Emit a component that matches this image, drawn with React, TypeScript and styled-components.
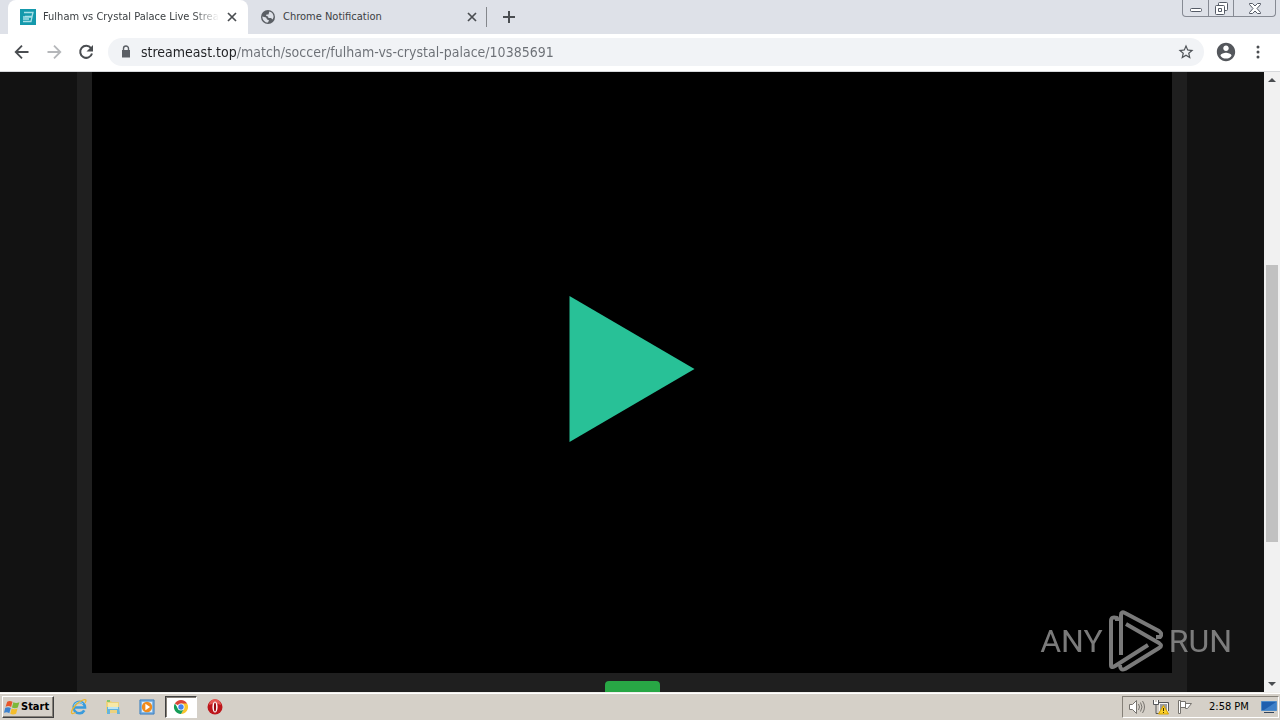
import React from 'react';
import styled, { createGlobalStyle } from 'styled-components';

const GlobalStyle = createGlobalStyle`
  * { box-sizing: border-box; }
  body { margin: 0; overflow: hidden; font: 11px/16px Tahoma, "DejaVu Sans Condensed", "DejaVu Sans", sans-serif; }
  button { font: inherit; color: inherit; padding: 0; border: 0; background: none; }
  svg { display: block; flex: none; }
`;

const Desktop = styled.div`
  height: 100vh;
  display: flex;
  flex-direction: column;
`;

const TabStrip = styled.header`
  flex: none;
  height: 34px;
  display: flex;
  padding-left: 8px;
  background: #dee1e8;
`;

const Tab = styled.div<{ $active?: boolean }>`
  width: 240px;
  display: flex;
  align-items: center;
  gap: 7px;
  padding: 0 10px 0 12px;
  color: #3c4043;
  background: ${(p) => (p.$active ? '#fff' : 'transparent')};
  border-radius: 8px 8px 0 0;
`;

const TabTitle = styled.button<{ $fade?: boolean }>`
  flex: 1;
  min-width: 0;
  overflow: hidden;
  white-space: nowrap;
  text-align: left;
  ${(p) => p.$fade && 'mask-image: linear-gradient(90deg, #000 85%, transparent);'}
`;

const IconButton = styled.button<{ $size?: number; $color?: string }>`
  flex: none;
  width: ${(p) => p.$size || 16}px;
  height: ${(p) => p.$size || 16}px;
  display: flex;
  align-items: center;
  justify-content: center;
  color: ${(p) => p.$color || '#4a4d51'};
`;

const NewTab = styled.div`
  align-self: center;
  height: 20px;
  display: flex;
  align-items: center;
  padding-left: 14px;
  margin-left: -2px;
  border-left: 1px solid #84878c;
`;

const WindowControls = styled.div`
  display: flex;
  height: 17px;
  margin: 0 4px 0 auto;
  border: 1px solid #868a93;
  border-top: 0;
  border-radius: 0 0 4px 4px;
`;

const WindowButton = styled.button<{ $wide?: boolean }>`
  width: ${(p) => (p.$wide ? 42 : 25)}px;
  display: flex;
  align-items: center;
  justify-content: center;
  & + & { border-left: 1px solid #868a93; }
`;

const Toolbar = styled.nav`
  flex: none;
  height: 38px;
  display: flex;
  align-items: center;
  gap: 8px;
  padding: 0 10px 1px;
  background: #fff;
  border-bottom: 1px solid #d6d8db;
`;

const Omnibox = styled.label`
  flex: 1;
  height: 28px;
  display: flex;
  align-items: center;
  gap: 7px;
  margin: 0 2px;
  padding: 0 10px;
  border-radius: 14px;
  background: #f1f3f6;
`;

const Address = styled.input`
  flex: 1;
  min-width: 0;
  height: 20px;
  padding: 0;
  border: 0;
  outline: 0;
  font: 14px/20px Tahoma, "DejaVu Sans Condensed", "DejaVu Sans", sans-serif;
  color: transparent;
  background: linear-gradient(90deg, #202124 96px, #6b6f75 96px);
  background-clip: text;
  -webkit-background-clip: text;
`;

const Viewport = styled.div`
  flex: 1;
  min-height: 0;
  display: flex;
`;

const Page = styled.main`
  flex: 1;
  position: relative;
  display: flex;
  justify-content: center;
  background: #121212;
`;

const Container = styled.section`
  width: 100%;
  max-width: 1110px;
  padding: 0 15px;
  display: flex;
  flex-direction: column;
  background: #1f1f1f;
`;

const Player = styled.div`
  flex: 1;
  display: flex;
  align-items: center;
  justify-content: center;
  padding-bottom: 8px;
  background: #000;
`;

const Actions = styled.div`
  height: 19px;
  display: flex;
  justify-content: center;
  align-items: flex-end;
`;

const GreenButton = styled.button`
  width: 55px;
  height: 11px;
  border-radius: 4px 4px 0 0;
  background: #28a745;
`;

const Watermark = styled.div`
  position: absolute;
  right: 32px;
  bottom: 20px;
  display: flex;
  align-items: center;
  gap: 6px;
  color: #8b8b8b;
  opacity: 0.88;
  font: 32px/62px Roboto, sans-serif;
`;

const Scrollbar = styled.div`
  flex: none;
  width: 16px;
  display: flex;
  flex-direction: column;
  align-items: center;
  background: #f1f1f1;
`;

const Track = styled.div`
  flex: 1;
  width: 12px;
  display: grid;
  grid-template-rows: 177fr 277fr 134fr;
`;

const Thumb = styled.div`
  grid-row: 2;
  background: #c1c1c1;
`;

const Taskbar = styled.footer`
  flex: none;
  height: 28px;
  display: flex;
  align-items: center;
  padding: 1px 1px 0 2px;
  background: #d5d0c8;
  border-top: 1px solid #f0eeea;
  box-shadow: inset 0 1px #fff;
`;

const StartButton = styled.button`
  width: 52px;
  height: 22px;
  display: flex;
  align-items: center;
  padding-left: 1px;
  font-weight: bold;
  color: #000;
  border: 1px solid;
  border-color: #fff #404040 #404040 #fff;
  box-shadow: inset -1px -1px #858078;
`;

const QuickLaunch = styled.div`
  display: flex;
  align-items: center;
  gap: 2px;
  margin-left: 9px;
`;

const TaskButton = styled.button<{ $pressed?: boolean }>`
  width: 32px;
  height: 22px;
  display: flex;
  align-items: center;
  justify-content: center;
  border: 1px solid transparent;
  ${(p) => p.$pressed && 'background: #fff; border-color: #404040 #fff #fff #404040; box-shadow: inset 1px 1px #858078;'}
`;

const Tray = styled.div`
  height: 22px;
  display: flex;
  align-items: center;
  gap: 8px;
  margin-left: auto;
  padding: 0 1px 0 6px;
  color: #000;
  border: 1px solid;
  border-color: #858078 #fff #fff #858078;
`;

const Clock = styled.time`
  width: 44px;
  margin-left: 8px;
  white-space: nowrap;
`;

const CloseIcon = () => (
  <svg width="10" height="10" viewBox="0 0 10 10" stroke="currentColor" strokeWidth="1.7"><path d="M1 1l8 8M9 1L1 9" /></svg>
);

const Favicon = () => (
  <svg width="16" height="16" viewBox="0 0 16 16">
    <path fill="#1599ac" d="M0 0h16v16H0z" />
    <path fill="none" stroke="#a7e0e7" strokeWidth="1.3" d="M4 3.500h9l-1 4H5M3 8h9l-1 4.500H3M3 10h6" />
  </svg>
);

const Globe = () => (
  <svg width="16" height="16" viewBox="0 0 16 16">
    <circle cx="8" cy="8" r="7" fill="#5b5f65" />
    <path fill="#dee1e8" d="M2.300 7.500l3.800 1 1 2 1.900.7-1 2.400C4.800 13.600 2.400 11 2.300 7.500zM9.300 2.500c3 .8 4.300 3 4.300 5.500l-1 2.500-1.600-1.500H8.500L8 7.500l-2-.7.500-1.300h2z" />
  </svg>
);

const Arrow = ({ flip }: { flip?: boolean }) => (
  <svg width="16" height="16" viewBox="0 0 16 16" fill="none" stroke="currentColor" strokeWidth="1.8">
    <path d={flip ? 'M1.500 8h12M8 1.700L14.300 8 8 14.300' : 'M14.500 8h-12M8 1.700L1.700 8 8 14.300'} />
  </svg>
);

const Reload = () => (
  <svg width="16" height="16" viewBox="0 0 16 16">
    <path fill="none" stroke="currentColor" strokeWidth="2" d="M13 4.200A6 6 0 1 0 14 9.500" />
    <path fill="currentColor" d="M15 1v6.500H8.500z" />
  </svg>
);

const Lock = () => (
  <svg width="16" height="16" viewBox="0 0 16 16" fill="#5b5f65">
    <path d="M4 6h8v7.500H4z" />
    <path fill="none" stroke="#5b5f65" strokeWidth="1.400" d="M5.500 6V4.500a2.500 2.500 0 0 1 5 0V6" />
  </svg>
);

const Star = () => (
  <svg width="18" height="18" viewBox="0 0 24 24" fill="#4f5358">
    <path d="M22 9.240l-7.190-.62L12 2 9.190 8.630 2 9.240l5.460 4.730L5.820 21 12 17.270 18.180 21l-1.630-7.030L22 9.240zM12 15.400l-3.760 2.270 1-4.280-3.320-2.880 4.380-.38L12 6.100l1.710 4.040 4.380.38-3.320 2.880 1 4.280L12 15.400z" />
  </svg>
);

const Profile = () => (
  <svg width="22" height="22" viewBox="0 0 24 24" fill="#54575c">
    <path d="M12 2C6.480 2 2 6.480 2 12s4.480 10 10 10 10-4.480 10-10S17.520 2 12 2zm0 3c1.660 0 3 1.340 3 3s-1.340 3-3 3-3-1.340-3-3 1.340-3 3-3zm0 14.200c-2.500 0-4.710-1.280-6-3.220.03-1.990 4-3.080 6-3.080 1.990 0 5.970 1.090 6 3.080-1.290 1.940-3.500 3.220-6 3.220z" />
  </svg>
);

const AnyRunMark = () => (
  <svg width="54" height="62" viewBox="0 0 54 62" fill="none" stroke="currentColor" strokeWidth="4" strokeLinejoin="round">
    <path d="M8 11V8Q2 6 2 11V55Q2 58.500 6 56L39 35" />
    <path d="M12 45V5Q12 1 16 3L50 21Q54 24 51 27L47 27" />
    <path d="M17 14L50 33Q54 36 50 38L16 59Q11 61 11 55" />
  </svg>
);

const WindowsFlag = () => (
  <svg width="17" height="17" viewBox="0 0 16 16">
    <path fill="#e7562a" d="M3 2.500Q5.500 1 8 2.700L6.700 7.500Q4.300 6 1.500 7.300z" />
    <path fill="#7db83a" d="M8.800 3.100Q11.500 4.500 14.500 3L13 8Q10.300 9.300 7.500 8z" />
    <path fill="#3d82ce" d="M1.200 8.300Q4 7 6.400 8.500L5 13.300Q2.700 11.900 0 13z" />
    <path fill="#f4bd2a" d="M7.200 9Q9.800 10.300 12.700 9l-1.300 4.800Q8.500 15.200 5.900 13.900z" />
  </svg>
);

const Explorer = () => (
  <svg width="18" height="18" viewBox="0 0 18 18" fill="none">
    <path stroke="#3a9bdc" strokeWidth="2.600" d="M14.300 12.300A5.700 5.700 0 1 1 15 9.500H4" />
    <path stroke="#9bd9f5" d="M4 8a5.200 5.200 0 0 1 9-2" />
    <path stroke="#edb72d" strokeWidth="1.300" d="M15 5c2-3 1-4-2-3C8 4 2 10 1.500 14c-.2 2 1.500 2 4 .5" />
  </svg>
);

const Folder = () => (
  <svg width="18" height="18" viewBox="0 0 18 18">
    <path fill="#ecd27e" d="M2 3h5l1 1h7v11H2z" />
    <path fill="#f8e9a7" d="M4 5h10v5H4z" />
    <path fill="#83c56d" d="M3 2h3v2H3z" />
    <path fill="#65b4dc" d="M3 16V9h12l1 7h-3v-4H6v4z" />
    <path fill="#bce5f4" d="M4 9h10v2H4z" />
  </svg>
);

const MediaPlayer = () => (
  <svg width="16" height="16" viewBox="0 0 17 17">
    <path fill="#75ade0" stroke="#397ebf" d="M1 1h15v15H1z" />
    <path fill="#dcecf8" d="M3 3h11v11H3z" />
    <circle cx="8.500" cy="8.500" r="5.500" fill="#f08b1c" />
    <path fill="#fff" d="M6.800 5l5 3.500-5 3.500z" />
  </svg>
);

const ChromeLogo = () => (
  <svg width="16" height="16" viewBox="0 0 16 16">
    <path fill="#db4437" d="M8 8L1.900 4.500A7 7 0 0 1 14.100 4.500z" />
    <path fill="#f9c52d" d="M8 4.500h6.100A7 7 0 0 1 8 15l3-5.500z" />
    <path fill="#159c57" d="M1.900 4.500A7 7 0 0 0 8 15l3-5.200-6-.2z" />
    <circle cx="8" cy="8" r="3.500" fill="#fff" />
    <circle cx="8" cy="8" r="2.700" fill="#4583ee" />
  </svg>
);

const Opera = () => (
  <svg width="16" height="16" viewBox="0 0 16 16">
    <circle cx="8" cy="8" r="7.500" fill="#bd161b" />
    <path fill="#e55752" d="M2 6a6 6 0 0 1 12 0Q8 3 2 6z" />
    <ellipse cx="8" cy="8" rx="2.600" ry="5.500" fill="#fff" />
    <ellipse cx="8" cy="8" rx="1.100" ry="4.500" fill="#98090d" />
  </svg>
);

const Speaker = () => (
  <svg width="16" height="16" viewBox="0 0 16 16" fill="none" stroke="#77746f">
    <path fill="#fff" d="M.5 5.500h3l4-4v13l-4-4h-3z" />
    <path d="M9.500 5q2 3 0 6M11.500 3.500q3 4.500 0 9M13.500 2q4 6 0 12" />
  </svg>
);

const Network = () => (
  <svg width="16" height="16" viewBox="0 0 16 16">
    <path fill="#9a9c9f" stroke="#f7f7f7" d="M6.500 4.500h8v7h-8z" />
    <path fill="none" stroke="#56585b" d="M6 3.500h9.500V12M6 14.500h6M.5 1v4.500h5V1M3 5.500v9h4" />
    <path fill="#fff" d="M1 1h1v4H1zM4 1h1v4H4zM2 3h2v2H2z" />
    <path fill="#fbd12b" stroke="#d5a100" d="M10.500 6.500l5 8.500h-10z" />
    <path fill="#423000" d="M10 9h1v3h-1zM10 13h1v1h-1z" />
  </svg>
);

const Flag = () => (
  <svg width="16" height="16" viewBox="0 0 16 16" fill="#fff" stroke="#77746f">
    <path d="M1.500 1.500h2v13h-2zM3.500 2.500h5v6h-5zM8.500 4.500h6l-2 2.500-2 2.500h-2z" />
  </svg>
);

const Monitor = () => (
  <svg width="16" height="16" viewBox="0 0 16 16">
    <path fill="#1f5fae" stroke="#4e8bc8" d="M.5 2.500h15v9H.5z" />
    <path fill="#3f80c8" d="M15 3L3 11h12z" />
    <path fill="#30435c" d="M3 13h10v1H3z" />
  </svg>
);

const ScrollArrow = ({ down }: { down?: boolean }) => (
  <svg width="8" height="4" viewBox="0 0 8 4" fill="currentColor"><path d={down ? 'M0 0h8L4 4z' : 'M0 4h8L4 0z'} /></svg>
);

export default function App() {
  return (
    <Desktop>
      <GlobalStyle />
      <TabStrip>
        <Tab $active>
          <Favicon />
          <TabTitle $fade>Fulham vs Crystal Palace Live Stream</TabTitle>
          <IconButton $size={12} aria-label="Close tab"><CloseIcon /></IconButton>
        </Tab>
        <Tab>
          <Globe />
          <TabTitle>Chrome Notification</TabTitle>
          <IconButton $size={12} aria-label="Close tab"><CloseIcon /></IconButton>
        </Tab>
        <NewTab>
          <IconButton aria-label="New tab">
            <svg width="12" height="12" viewBox="0 0 12 12" stroke="currentColor" strokeWidth="2"><path d="M6 0v12M0 6h12" /></svg>
          </IconButton>
        </NewTab>
        <WindowControls>
          <WindowButton aria-label="Minimize">
            <svg width="12" height="16" viewBox="0 0 12 16" fill="#fff" stroke="#555b66"><rect x=".5" y="8.500" width="11" height="3" rx="1" /></svg>
          </WindowButton>
          <WindowButton aria-label="Restore">
            <svg width="13" height="13" viewBox="0 0 13 13" fill="#fff" stroke="#555b66">
              <rect x="3.500" y=".5" width="9" height="8" rx="1" />
              <rect x=".5" y="3.500" width="9" height="9" rx="1" />
              <path d="M3.500 6.500h3v3h-3z" />
            </svg>
          </WindowButton>
          <WindowButton $wide aria-label="Close">
            <svg width="12" height="11" viewBox="0 0 12 11" fill="#fff" stroke="#555b66"><path d="M.5.5h3L6 3 8.500.5h3v1l-3.500 4 3.500 4v1h-3L6 8l-2.500 2.500h-3v-1L4 5.500l-3.500-4z" /></svg>
          </WindowButton>
        </WindowControls>
      </TabStrip>
      <Toolbar>
        <IconButton $size={24} aria-label="Back"><Arrow /></IconButton>
        <IconButton $size={24} $color="#b5b7ba" aria-label="Forward"><Arrow flip /></IconButton>
        <IconButton $size={24} aria-label="Reload"><Reload /></IconButton>
        <Omnibox>
          <Lock />
          <Address aria-label="Address" defaultValue="streameast.top/match/soccer/fulham-vs-crystal-palace/10385691" />
          <IconButton aria-label="Bookmark"><Star /></IconButton>
        </Omnibox>
        <IconButton $size={24} aria-label="Profile"><Profile /></IconButton>
        <IconButton $size={24} aria-label="Menu">
          <svg width="4" height="16" viewBox="0 0 4 16" fill="currentColor"><circle cx="2" cy="3" r="1.500" /><circle cx="2" cy="8" r="1.500" /><circle cx="2" cy="13" r="1.500" /></svg>
        </IconButton>
      </Toolbar>
      <Viewport>
        <Page>
          <Container>
            <Player>
              <button aria-label="Play">
                <svg width="126" height="146" viewBox="0 0 126 146"><path fill="#28c197" d="M.5 0l125 73L.5 146z" /></svg>
              </button>
            </Player>
            <Actions><GreenButton aria-label="Stream link" /></Actions>
          </Container>
          <Watermark>
            <span>ANY</span>
            <AnyRunMark />
            <span>RUN</span>
          </Watermark>
        </Page>
        <Scrollbar>
          <IconButton aria-label="Scroll up"><ScrollArrow /></IconButton>
          <Track><Thumb /></Track>
          <IconButton aria-label="Scroll down"><ScrollArrow down /></IconButton>
        </Scrollbar>
      </Viewport>
      <Taskbar>
        <StartButton><WindowsFlag />Start</StartButton>
        <QuickLaunch>
          <TaskButton aria-label="Internet Explorer"><Explorer /></TaskButton>
          <TaskButton aria-label="File Explorer"><Folder /></TaskButton>
          <TaskButton aria-label="Media Player"><MediaPlayer /></TaskButton>
          <TaskButton $pressed aria-label="Chrome"><ChromeLogo /></TaskButton>
          <TaskButton aria-label="Opera"><Opera /></TaskButton>
        </QuickLaunch>
        <Tray>
          <Speaker />
          <Network />
          <Flag />
          <Clock>2:58 PM</Clock>
          <Monitor />
        </Tray>
      </Taskbar>
    </Desktop>
  );
}
